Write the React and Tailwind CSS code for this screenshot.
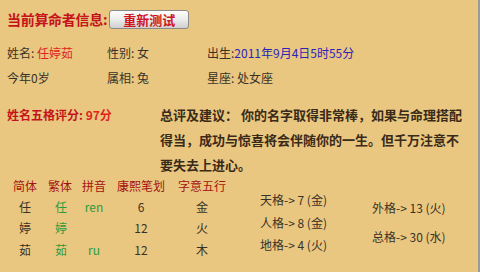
import React from "react";

const F = { fontFamily: '"Noto Sans CJK SC", "Noto Sans", sans-serif' };

export default function App() {
  return (
    <div
      className="w-[480px] h-[272px] overflow-hidden bg-[#e9c781] border-r-2 border-[#9a9a9a] text-[#3a3226] relative"
      style={F}
    >
      <div className="pl-[7px] pt-[9px]">
        {/* title row */}
        <div className="flex items-center h-[20px]">
          <span className="text-[14px] font-bold text-[#c4141a] leading-none tracking-[-0.3px]">当前算命者信息:</span>
          <button className="ml-[2px] w-[80px] h-[19px] rounded-[3px] border border-[#8a8a8a] bg-gradient-to-b from-[#fdfdfd] via-[#ececec] to-[#cfcfcf] text-[13px] font-bold text-[#d0141c] leading-none flex items-center justify-center">
            重新测试
          </button>
        </div>
        {/* info rows */}
        <div className="mt-[11px] grid grid-cols-[100px_100px_auto] text-[12px] leading-[25px]">
          <div>姓名: <span className="text-[#e0241c]">任婷茹</span></div>
          <div>性别: 女</div>
          <div>出生:<span className="text-[#2b24b8]">2011年9月4日5时55分</span></div>
          <div>今年0岁</div>
          <div>属相: 兔</div>
          <div>星座: 处女座</div>
        </div>
        {/* evaluation */}
        <div className="mt-[12px] flex">
          <div className="w-[153px] shrink-0 text-[12px] font-bold text-[#c4141a] leading-[25px]">
            姓名五格评分: <span className="text-[#e0241c]">97分</span>
          </div>
          <p className="w-[306px] text-[13px] font-bold leading-[25px] text-[#3a2a18]">
            总评及建议： 你的名字取得非常棒，如果与命理搭配得当，成功与惊喜将会伴随你的一生。但千万注意不要失去上进心。
          </p>
        </div>
        {/* bottom */}
        <div className="flex mt-[-1px]">
          <table className="w-[228px] text-[12px] border-collapse table-fixed">
            <thead>
              <tr className="text-[#a31410] h-[20px]">
                <td className="w-[34px] text-left pl-[6px]">简体</td>
                <td className="w-[35px] text-left pl-[7px]">繁体</td>
                <td className="w-[36px] text-center">拼音</td>
                <td className="w-[58px] text-center">康熙笔划</td>
                <td className="w-[65px] text-left pl-[8px]">字意五行</td>
              </tr>
            </thead>
            <tbody>
              {[
                ["任", "任", "ren", "6", "金"],
                ["婷", "婷", "", "12", "火"],
                ["茹", "茹", "ru", "12", "木"],
              ].map((r, i) => (
                <tr key={i} className="h-[21.5px]">
                  <td className="text-left pl-[12px]">{r[0]}</td>
                  <td className="text-left pl-[14px] text-[#2f9a3c]">{r[1]}</td>
                  <td className="text-center text-[#2f9a3c]">{r[2]}</td>
                  <td className="text-center">{r[3]}</td>
                  <td className="text-left pl-[26px]">{r[4]}</td>
                </tr>
              ))}
            </tbody>
          </table>
          <div className="ml-[25px] mt-[13px] flex text-[12px]">
            <div className="flex flex-col leading-[22.5px]">
              <div>天格-&gt; 7 (金)</div>
              <div>人格-&gt; 8 (金)</div>
              <div>地格-&gt; 4 (火)</div>
            </div>
            <div className="ml-[45px] mt-[8px] flex flex-col gap-[7px] leading-[22px]">
              <div>外格-&gt; 13 (火)</div>
              <div>总格-&gt; 30 (水)</div>
            </div>
          </div>
        </div>
      </div>
    </div>
  );
}
